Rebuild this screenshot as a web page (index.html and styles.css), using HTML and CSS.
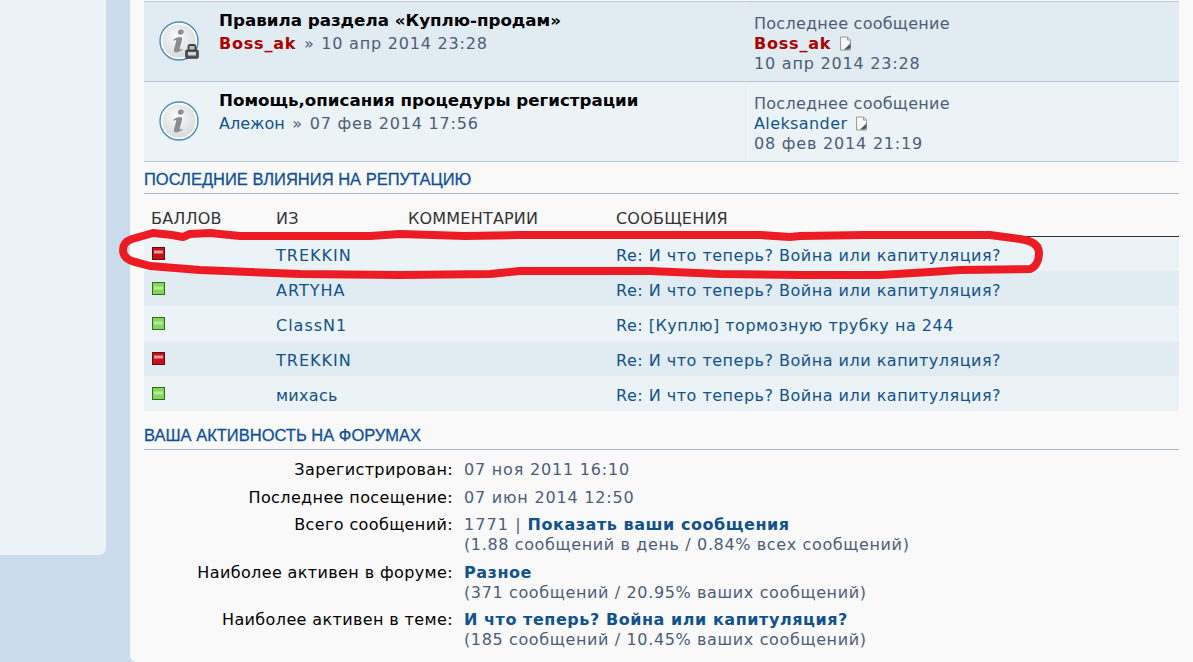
FILE: index.html
```html
<!DOCTYPE html>
<html lang="ru">
<head>
  <meta charset="utf-8">
  <title>Панель управления</title>
  <link rel="stylesheet" href="styles.css">
</head>
<body>
  <svg width="0" height="0" class="defs">
    <defs>
      <radialGradient id="disc" cx="45%" cy="40%" r="65%">
        <stop offset="0" stop-color="#fbfbfb"/>
        <stop offset="1" stop-color="#d2d4d6"/>
      </radialGradient>
      <symbol id="info" viewBox="0 0 42 42">
        <circle cx="21" cy="21" r="19" fill="url(#disc)" stroke="#4b8dba" stroke-width="1.4"/>
        <circle cx="21" cy="21" r="17.3" fill="none" stroke="#fff" stroke-width="1.6"/>
        <path d="M23 9.5c1.900 0 3 1.100 2.700 2.700-.3 1.500-1.700 2.500-3.300 2.500-1.700 0-2.800-1.100-2.500-2.700.3-1.500 1.500-2.500 3.100-2.500zM15.500 19.500c2-1.600 4.200-2.500 6.300-2.500 2 0 2.700 1.100 2.200 3l-2.400 8.800c-.2.800.4 1 1 .6l1.400-.9.500 1.100c-2 1.700-4.100 2.800-6.200 2.800-2 0-2.800-1.100-2.300-3.100l2.300-8.500c.2-.9-.3-1.100-1-.7l-1.700 1z" fill="#8b8d90"/>
      </symbol>
      <symbol id="lock" viewBox="0 0 14 16">
        <path d="M3.500 8V3.500a1.500 1.500 0 0 1 1.500-1.500h4a1.500 1.500 0 0 1 1.500 1.500V8" fill="#b9bbbd" stroke="#45484b" stroke-width="1.800"/>
        <rect x=".7" y="7" width="12.600" height="8.300" rx="1" fill="#4f5255" stroke="#2e3032" stroke-width=".8"/>
        <rect x="3" y="9" width="8" height="3.500" fill="#d2d4d6"/>
      </symbol>
      <symbol id="latest" viewBox="0 0 13 15">
        <path d="M1.500 1h7l3 3v10h-10z" fill="#f6f6f6" stroke="#9a9a9a"/>
        <path d="M8.500 1v3h3" fill="none" stroke="#9a9a9a"/>
        <path d="M5 13.500l6.500-6v4.500l-2 1.500z" fill="#555"/>
      </symbol>
      <symbol id="pos" viewBox="0 0 13 13">
        <rect x=".5" y=".5" width="12" height="12" fill="#86d65c" stroke="#2f6b1c"/>
        <rect x="2" y="4.500" width="9" height="3" fill="#b8e99a"/>
      </symbol>
      <symbol id="neg" viewBox="0 0 13 13">
        <rect x=".5" y=".5" width="12" height="12" fill="#c8101a" stroke="#5c1015"/>
        <rect x="2" y="3.500" width="9" height="3" fill="#f39a9c"/>
      </symbol>
    </defs>
  </svg>

  <div class="page">
    <aside class="side"></aside>

    <main class="panel">
      <ul class="topics">
        <li class="topic alt">
          <span class="topic-icon">
            <svg class="info"><use href="#info"/></svg>
            <svg class="lock"><use href="#lock"/></svg>
          </span>
          <div class="topic-main">
            <a class="topic-title">Правила раздела «Куплю-продам»</a>
            <div class="meta"><a class="admin">Boss_ak</a> <span class="sep">»</span> <span class="date">10 апр 2014 23:28</span></div>
          </div>
          <div class="lastpost">
            <div class="label">Последнее сообщение</div>
            <div><a class="admin">Boss_ak</a> <svg class="latest"><use href="#latest"/></svg></div>
            <div class="date">10 апр 2014 23:28</div>
          </div>
        </li>
        <li class="topic">
          <span class="topic-icon">
            <svg class="info"><use href="#info"/></svg>
          </span>
          <div class="topic-main">
            <a class="topic-title">Помощь,описания процедуры регистрации</a>
            <div class="meta"><a>Алежон</a> <span class="sep">»</span> <span class="date">07 фев 2014 17:56</span></div>
          </div>
          <div class="lastpost">
            <div class="label">Последнее сообщение</div>
            <div><a class="user">Aleksander</a> <svg class="latest"><use href="#latest"/></svg></div>
            <div class="date">08 фев 2014 21:19</div>
          </div>
        </li>
      </ul>

      <h3 class="section-title">ПОСЛЕДНИЕ ВЛИЯНИЯ НА РЕПУТАЦИЮ</h3>
      <table class="rep">
        <thead>
          <tr><th>БАЛЛОВ</th><th>ИЗ</th><th>КОММЕНТАРИИ</th><th>СООБЩЕНИЯ</th></tr>
        </thead>
        <tbody>
          <tr><td><svg class="mark"><use href="#neg"/></svg></td><td><a class="from">TREKKIN</a></td><td></td><td><a>Re: И что теперь? Война или капитуляция?</a></td></tr>
          <tr><td><svg class="mark"><use href="#pos"/></svg></td><td><a class="from">ARTYHA</a></td><td></td><td><a>Re: И что теперь? Война или капитуляция?</a></td></tr>
          <tr><td><svg class="mark"><use href="#pos"/></svg></td><td><a class="from">ClassN1</a></td><td></td><td><a>Re: [Куплю] тормозную трубку на 244</a></td></tr>
          <tr><td><svg class="mark"><use href="#neg"/></svg></td><td><a class="from">TREKKIN</a></td><td></td><td><a>Re: И что теперь? Война или капитуляция?</a></td></tr>
          <tr><td><svg class="mark"><use href="#pos"/></svg></td><td><a class="from-ru">михась</a></td><td></td><td><a>Re: И что теперь? Война или капитуляция?</a></td></tr>
        </tbody>
      </table>

      <h3 class="section-title activity-title">ВАША АКТИВНОСТЬ НА ФОРУМАХ</h3>
      <dl class="activity">
        <dt>Зарегистрирован:</dt>
        <dd class="date">07 ноя 2011 16:10</dd>
        <dt>Последнее посещение:</dt>
        <dd class="date">07 июн 2014 12:50</dd>
        <dt>Всего сообщений:</dt>
        <dd><span class="count">1771 |</span> <a class="strong">Показать ваши сообщения</a><br>(1.88 сообщений в день / 0.84% всех сообщений)</dd>
        <dt>Наиболее активен в форуме:</dt>
        <dd><a class="strong">Разное</a><br>(371 сообщений / 20.95% ваших сообщений)</dd>
        <dt>Наиболее активен в теме:</dt>
        <dd><a class="strong">И что теперь? Война или капитуляция?</a><br>(185 сообщений / 10.45% ваших сообщений)</dd>
      </dl>
    </main>
  </div>

  <!-- red marker circle drawn over the first row -->
  <svg class="scribble" width="1193" height="662" viewBox="0 0 1193 662">
    <path d="M153 233L132 239C126 241 123 245 123 250C123 256 127 260 135 262L150 266L200 270L250 272L300 274L400 275L490 274L520 271L650 271L720 274L800 275L880 275L930 272L960 270L1030 269C1036 267 1039 260 1039 253C1039 246 1034 241 1020 239L990 235L865 235L800 236L790 237L760 235L520 235L465 236L400 234L370 236L240 236L210 233L190 234L183 237L172 235Z" fill="none" stroke="#ed1c24" stroke-width="8" stroke-linejoin="round"/>
  </svg>
</body>
</html>
```

FILE: styles.css
```css
html, body {
  margin: 0;
  height: 662px;
  overflow: hidden;
}

body {
  font-family: "DejaVu Sans", Verdana, sans-serif;
  font-size: 16px;
  color: #000;
  background: #cadceb;
}

a {
  color: #105289;
  text-decoration: none;
}

.defs {
  position: absolute;
}

.page {
  display: flex;
  align-items: flex-start;
  height: 662px;
}

.side {
  width: 106px;
  height: 555px;
  flex: none;
  background: #ecf3f7;
  border-bottom-right-radius: 7px;
}

.panel {
  flex: 1;
  height: 662px;
  box-sizing: border-box;
  margin-left: 24px;
  padding: 1px 14px 0;
  background: #f9f9f9;
  border-bottom-left-radius: 7px;
}

.date {
  letter-spacing: .8px;
}

/* topics */
.topics {
  list-style: none;
  margin: 0;
  padding: 0;
  border-top: 1px solid #b9c8d6;
}

.topic {
  display: flex;
  height: 79px;
  background: #ecf3f7;
  border-bottom: 1px solid #b9c8d6;
}

.topic.alt {
  background: #e1ebf2;
}

.topic-icon {
  position: relative;
  width: 75px;
  flex: none;
}

.info {
  position: absolute;
  left: 14px;
  top: 18px;
  width: 42px;
  height: 42px;
}

.lock {
  position: absolute;
  left: 41px;
  top: 41px;
  width: 14px;
  height: 16px;
}

.topic-main {
  width: 526px;
  flex: none;
  padding-top: 6px;
  color: #4c5d77;
}

.topic-title {
  display: block;
  color: #000;
  font-weight: bold;
  font-size: 16.7px;
  line-height: 25px;
}

.meta {
  line-height: 22px;
}

.sep {
  margin: 0 2.500px;
}

.admin {
  color: #aa0000;
  font-weight: bold;
  letter-spacing: .8px;
}

.user {
  letter-spacing: .4px;
}

.lastpost {
  flex: 1;
  padding: 12px 0 0 8px;
  color: #4c5d77;
  line-height: 20px;
  border-left: 1px solid #e6eef4;
}

.label {
  letter-spacing: .26px;
}

.latest {
  width: 13px;
  height: 15px;
  margin-left: 3px;
  vertical-align: -2px;
}

/* sections */
.section-title {
  margin: 7px 0 0;
  height: 24px;
  font-family: "Liberation Sans", Arial, sans-serif;
  font-size: 16.5px;
  line-height: 20px;
  font-weight: normal;
  -webkit-text-stroke: .3px #115098;
  color: #115098;
  border-bottom: 1px solid #a9b8c8;
}

/* reputation table */
.rep {
  width: 100%;
  margin-top: 7px;
  border-collapse: collapse;
  table-layout: fixed;
}

.rep th {
  box-sizing: border-box;
  height: 35px;
  padding: 0 0 0 7px;
  text-align: left;
  font-weight: normal;
  font-size: 16px;
  letter-spacing: .2px;
  color: #333;
  border-bottom: 1px solid #333;
}

.rep th:nth-child(1) {
  width: 125px;
}

.rep th:nth-child(2) {
  width: 132px;
}

.rep th:nth-child(3) {
  width: 208px;
}

.rep td {
  box-sizing: border-box;
  height: 35px;
  padding: 4px 0 0 7px;
  letter-spacing: .5px;
}

.rep .from {
  letter-spacing: 1px;
}

.rep .from-ru {
  letter-spacing: .3px;
}

.rep tbody tr:nth-child(odd) {
  background: #ecf3f7;
}

.rep tbody tr:nth-child(even) {
  background: #e1ebf2;
}

.mark {
  display: block;
  width: 13px;
  height: 13px;
  margin: -5px 0 0 1px;
}

/* profile activity */
.activity-title {
  margin-top: 14px;
}

.activity {
  display: grid;
  grid-template-columns: 309px 1fr;
  column-gap: 11px;
  margin: 6px 0 0;
  line-height: 20px;
}

.activity dt {
  text-align: right;
  padding-top: 4px;
  letter-spacing: .38px;
}

.activity dd {
  margin: 0;
  padding: 4px 0 3.500px;
  color: #4c5d77;
  letter-spacing: .63px;
}

.activity dd.date {
  letter-spacing: .8px;
}

.count {
  letter-spacing: 1.100px;
}

.strong {
  font-weight: bold;
  letter-spacing: .55px;
}

/* annotation */
.scribble {
  position: absolute;
  left: 0;
  top: 0;
  pointer-events: none;
}
```
